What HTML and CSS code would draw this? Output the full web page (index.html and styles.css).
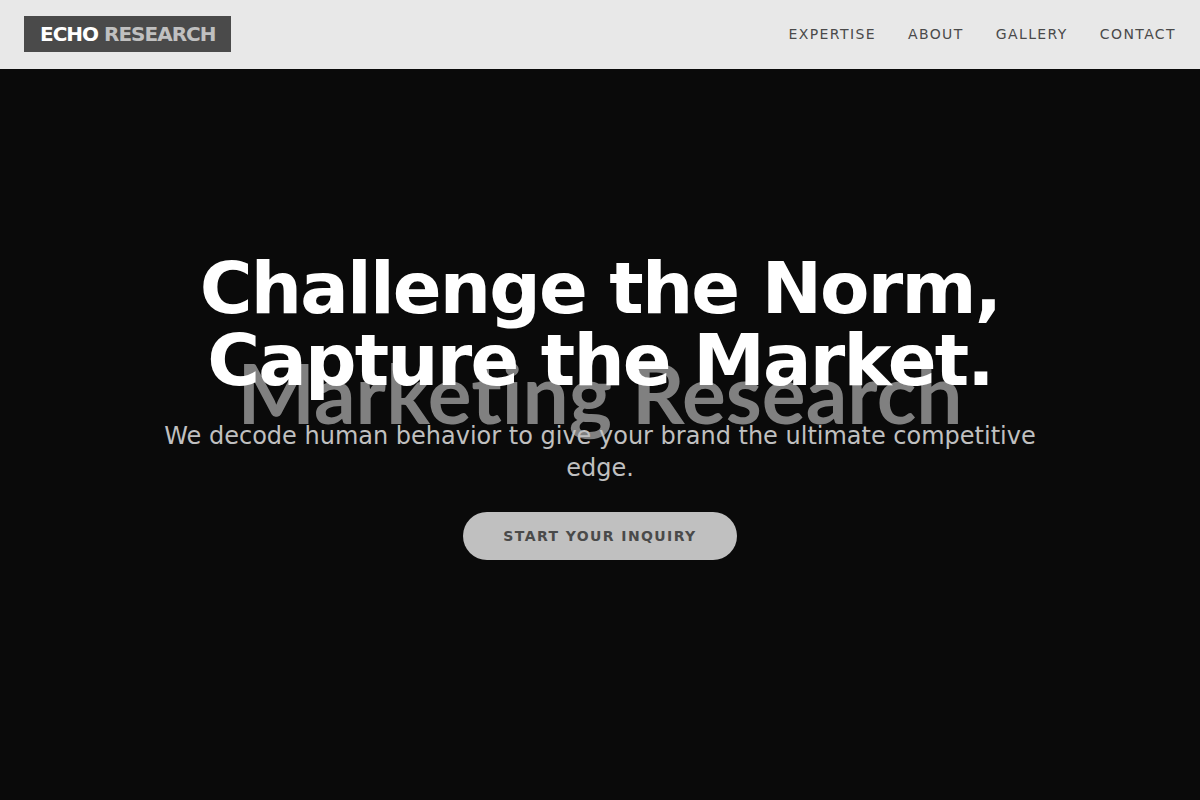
FILE: index.html
```html
<!DOCTYPE html>
<html lang="en">

<head>
    <meta charset="UTF-8">
    <meta name="viewport" content="width=device-width, initial-scale=1">
    <title>Echo Research</title>
    <link rel="stylesheet" href="styles.css">
</head>

<body>
    <header class="header">
        <a href="#home" class="logo">ECHO <span>RESEARCH</span></a>
        <nav class="nav">
            <a href="#expertise">Expertise</a>
            <a href="#about">About</a>
            <a href="#gallery">Gallery</a>
            <a href="#contact">Contact</a>
        </nav>
    </header>

    <main>
        <section id="home" class="hero">
            <div class="hero-backdrop" aria-hidden="true">Marketing Research</div>
            <div class="hero-content">
                <h1>Challenge the Norm, Capture the Market.</h1>
                <p>We decode human behavior to give your brand the ultimate competitive edge.</p>
                <a href="#contact" class="button">Start Your Inquiry</a>
            </div>
        </section>
    </main>
</body>

</html>
```

FILE: styles.css
```css
* {
    box-sizing: border-box;
}

body {
    margin: 0;
    font-family: "DejaVu Sans", sans-serif;
    font-size: 16px;
    line-height: 24px;
    background-color: #0a0a0a;
    color: white;
}

a {
    text-decoration: none;
}

.header {
    position: fixed;
    top: 0;
    left: 0;
    right: 0;
    z-index: 10;
    display: flex;
    justify-content: space-between;
    align-items: center;
    padding: 16px 24px;
    background-color: #e8e8e8;
    border-bottom: 1px solid #e8e8e8;
}

.logo {
    padding: 4px 16px;
    background-color: #4a4a4a;
    color: white;
    font-size: 20px;
    font-weight: bold;
    line-height: 28px;
    letter-spacing: -1px;
}

.logo span {
    color: #c0c0c0;
}

.nav {
    display: flex;
    gap: 32px;
}

.nav a {
    color: #4a4a4a;
    font-size: 14px;
    letter-spacing: 0.1em;
    text-transform: uppercase;
}

.hero {
    position: relative;
    display: flex;
    justify-content: center;
    align-items: center;
    min-height: 100vh;
    padding: 0 24px;
    text-align: center;
}

.hero-backdrop {
    position: absolute;
    inset: 0;
    display: flex;
    justify-content: center;
    align-items: center;
    padding-bottom: 16px;
    color: #808080;
    font-family: Lato, sans-serif;
    font-size: 82px;
    font-weight: bold;
    font-variant-ligatures: none;
}

.hero-content {
    position: relative;
    max-width: 896px;
}

.hero h1 {
    margin: 0 0 24px;
    font-size: 72px;
    line-height: 72px;
    letter-spacing: -0.025em;
}

.hero p {
    margin: 0 0 40px;
    color: #c0c0c0;
    font-size: 24px;
    line-height: 32px;
}

.button {
    padding: 16px 40px;
    border-radius: 24px;
    background-color: #c0c0c0;
    color: #4a4a4a;
    font-size: 14px;
    font-weight: bold;
    letter-spacing: 0.1em;
    text-transform: uppercase;
}
```
